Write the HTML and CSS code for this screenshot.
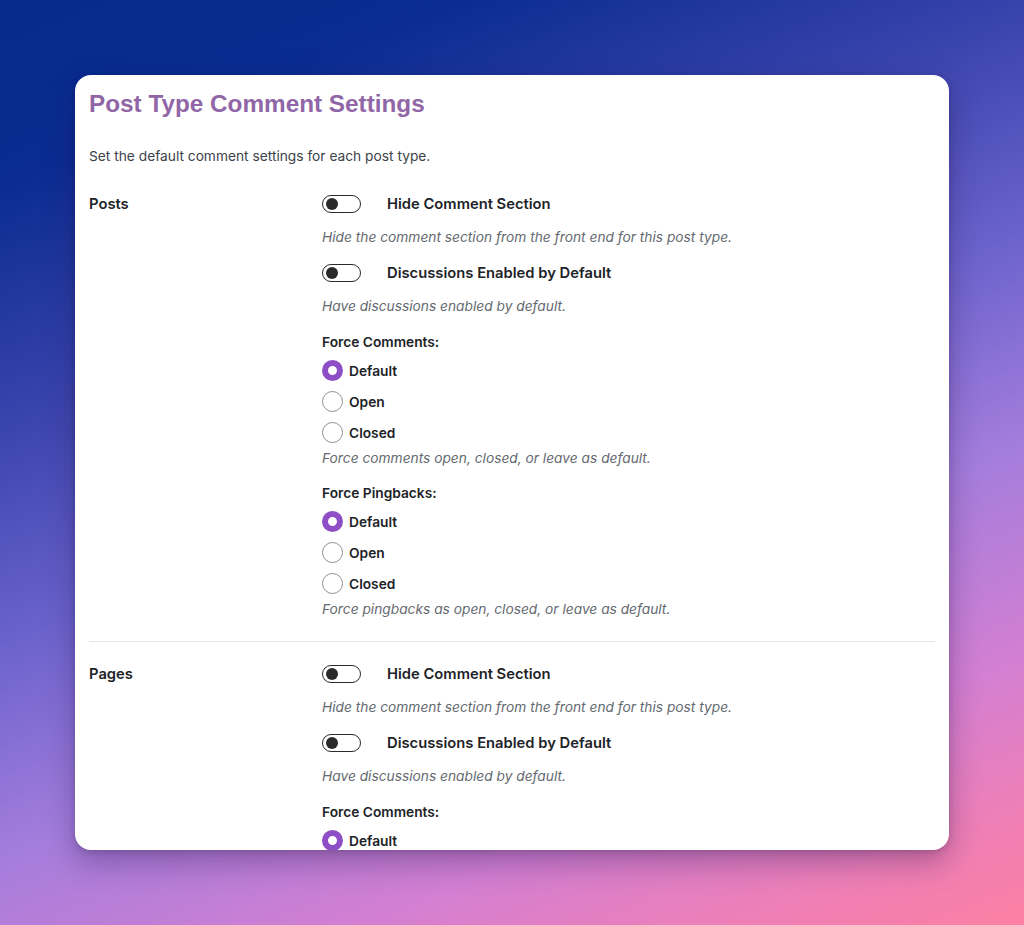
FILE: index.html
```html
<!DOCTYPE html>
<html lang="en">
<head>
<meta charset="utf-8">
<title>Post Type Comment Settings</title>
<link rel="stylesheet" href="styles.css">
</head>
<body>
<div class="card">
  <h1 class="title">Post Type Comment Settings</h1>
  <p class="intro">Set the default comment settings for each post type.</p>

  <section class="type-row">
    <div class="type-label">Posts</div>
    <div class="type-controls">
      <div class="toggle-item">
        <label class="toggle-row"><span class="toggle"><span class="knob"></span></span><span class="toggle-text">Hide Comment Section</span></label>
        <p class="desc">Hide the comment section from the front end for this post type.</p>
      </div>
      <div class="toggle-item">
        <label class="toggle-row"><span class="toggle"><span class="knob"></span></span><span class="toggle-text">Discussions Enabled by Default</span></label>
        <p class="desc">Have discussions enabled by default.</p>
      </div>
      <div class="group">
        <div class="group-label">Force Comments:</div>
        <div class="radios">
          <label class="radio-row"><span class="radio checked"></span>Default</label>
          <label class="radio-row"><span class="radio"></span>Open</label>
          <label class="radio-row"><span class="radio"></span>Closed</label>
        </div>
        <p class="desc tight">Force comments open, closed, or leave as default.</p>
      </div>
      <div class="group">
        <div class="group-label">Force Pingbacks:</div>
        <div class="radios">
          <label class="radio-row"><span class="radio checked"></span>Default</label>
          <label class="radio-row"><span class="radio"></span>Open</label>
          <label class="radio-row"><span class="radio"></span>Closed</label>
        </div>
        <p class="desc tight">Force pingbacks as open, closed, or leave as default.</p>
      </div>
    </div>
  </section>

  <section class="type-row divided">
    <div class="type-label">Pages</div>
    <div class="type-controls">
      <div class="toggle-item">
        <label class="toggle-row"><span class="toggle"><span class="knob"></span></span><span class="toggle-text">Hide Comment Section</span></label>
        <p class="desc">Hide the comment section from the front end for this post type.</p>
      </div>
      <div class="toggle-item">
        <label class="toggle-row"><span class="toggle"><span class="knob"></span></span><span class="toggle-text">Discussions Enabled by Default</span></label>
        <p class="desc">Have discussions enabled by default.</p>
      </div>
      <div class="group">
        <div class="group-label">Force Comments:</div>
        <div class="radios">
          <label class="radio-row"><span class="radio checked"></span>Default</label>
        </div>
      </div>
    </div>
  </section>
</div>
</body>
</html>
```

FILE: styles.css
```css
* { box-sizing: border-box; }

html, body {
  margin: 0;
  padding: 0;
}

body {
  width: 1024px;
  height: 925px;
  overflow: hidden;
  font-family: Inter, "Noto Sans", "Liberation Sans", sans-serif;
  color: #1d2327;
  background: linear-gradient(158deg, #052a8c 0%, #0a2c92 14%, #3a44ad 32%, #6a62cc 48%, #a47ddc 64%, #d37fd2 80%, #f07fb5 92%, #fb7fa2 100%);
  padding: 75px 75px 0 75px;
}

.card {
  width: 874px;
  height: 775px;
  background: #ffffff;
  border-radius: 16px;
  overflow: hidden;
  padding: 13px 14px 0 14px;
  box-shadow: 0 12px 30px rgba(40, 20, 80, 0.35), 0 2px 6px rgba(0, 0, 0, 0.15);
}

.title {
  margin: 0;
  font-family: "Liberation Sans", Arial, sans-serif;
  font-size: 24.3px;
  line-height: 32px;
  font-weight: 700;
  color: #9066a6;
}

.intro {
  margin: 26px 0 0 0;
  font-size: 13.75px;
  line-height: 20px;
  color: #3c434a;
}

.type-row {
  display: grid;
  grid-template-columns: 233px 1fr;
  padding-top: 23px;
  padding-bottom: 22px;
}

.type-row.divided {
  border-top: 1px solid #e6e6e6;
  padding-top: 17px;
}

.type-label {
  font-size: 14.75px;
  font-weight: 600;
  line-height: 30px;
  color: #1d2327;
}

.toggle-item + .toggle-item {
  margin-top: 11px;
}

.toggle-row {
  display: flex;
  align-items: center;
  height: 30px;
  gap: 26px;
}

.toggle {
  display: flex;
  align-items: center;
  width: 39px;
  height: 18px;
  border: 1.5px solid #2a2a2a;
  border-radius: 9px;
  padding-left: 3px;
}

.knob {
  width: 12px;
  height: 12px;
  border-radius: 50%;
  background: #2a2a2a;
}

.toggle-text {
  font-size: 14.75px;
  font-weight: 600;
  color: #1d2327;
}

.desc {
  margin: 8px 0 0 0;
  font-size: 13.75px;
  line-height: 20px;
  font-style: italic;
  color: #646970;
}

.desc.tight {
  margin-top: 0;
}

.group {
  margin-top: 16px;
}

.group + .group {
  margin-top: 15px;
}

.group-label {
  font-size: 13.75px;
  font-weight: 600;
  line-height: 20px;
  color: #1d2327;
}

.radios {
  margin-top: 3px;
}

.radio-row {
  display: flex;
  align-items: center;
  height: 31px;
  gap: 6px;
  font-size: 13.75px;
  font-weight: 600;
  color: #1d2327;
}

.radio {
  width: 21px;
  height: 21px;
  border-radius: 50%;
  border: 1px solid #8c8f94;
  background: #fff;
}

.radio.checked {
  border: 6px solid #8e4ec6;
  background: #fff;
}
```
